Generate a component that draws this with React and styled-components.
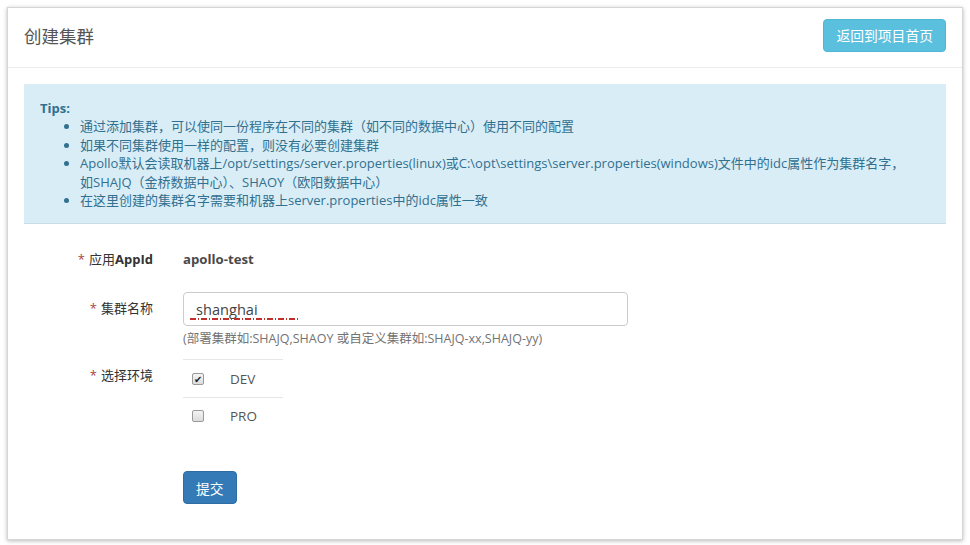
import React from "react";
import styled, { createGlobalStyle } from "styled-components";

const GlobalStyle = createGlobalStyle`
  html, body {
    margin: 0;
    padding: 0;
    background: #fff;
  }
  body {
    font-family: "Open Sans", "Noto Sans CJK SC", sans-serif;
    font-size: 14px;
    color: #333;
  }
`;

// --- Panel ---
const Page = styled.div`
  padding: 7px;
  width: 970px;
  height: 545px;
  box-sizing: border-box;
`;

const Panel = styled.div`
  height: 533px;
  box-sizing: border-box;
  border: 1px solid #d6d6d6;
  box-shadow: 0 1px 4px rgba(0, 0, 0, 0.28);
  background: #fff;
`;

const PanelHeader = styled.div`
  display: flex;
  align-items: center;
  justify-content: space-between;
  height: 60px;
  box-sizing: border-box;
  padding: 0 16px 5px 16px;
  border-bottom: 1px solid #ececec;
`;

const Title = styled.h1`
  margin: 0;
  font-size: 17.5px;
  font-weight: 400;
  color: #555;
`;

const Button = styled.button`
  font-family: inherit;
  font-size: 13.8px;
  color: #fff;
  border: 1px solid ${(p) => p.$border};
  background: ${(p) => p.$bg};
  border-radius: 4px;
  height: 33px;
  padding: 0 ${(p) => p.$pad || 12}px;
  cursor: pointer;
`;

const Body = styled.div`
  padding: 16px 16px 0 16px;
`;

// --- Tips ---
const Tips = styled.div`
  background: #d9edf7;
  border-bottom: 1px solid #c9dde8;
  color: #31708f;
  padding: 15px 16px 14px 16px;
  font-size: 13px;
  line-height: 18.4px;
`;

const TipsTitle = styled.div`
  font-weight: 700;
`;

const TipsList = styled.ul`
  margin: 0;
  padding-left: 40px;
  white-space: nowrap;
`;

// --- Form ---
const Form = styled.div`
  display: grid;
  grid-template-columns: 129px 1fr;
  column-gap: 30px;
  margin-top: 18px;
`;

const Label = styled.div`
  text-align: right;
  font-size: 13px;
  color: #333;
  line-height: 18px;
  padding-top: ${(p) => p.$top || 7}px;
`;

const Star = styled.span`
  color: #a94442;
  margin-right: 4px;
`;

const Bold = styled.span`
  font-weight: 700;
`;

const Field = styled.div`
  margin-bottom: ${(p) => p.$mb || 15}px;
`;

const StaticValue = styled.div`
  font-weight: 700;
  font-size: 13.2px;
  color: #4a4a4a;
  line-height: 18px;
  padding: 8px 0;
`;

const InputWrap = styled.div`
  position: relative;
  width: 445px;
`;

const Input = styled.input`
  box-sizing: border-box;
  width: 100%;
  height: 34px;
  padding: 0 12px;
  border: 1px solid #ccc;
  border-radius: 4px;
  font-family: inherit;
  font-size: 14.6px;
  color: #444;
  outline: none;
`;

const SpellMark = styled.span`
  position: absolute;
  left: 7px;
  top: 26px;
  width: 108px;
  height: 2px;
  background: repeating-linear-gradient(
    90deg,
    #c0302b 0 6px,
    transparent 6px 8px,
    #c0302b 8px 9px,
    transparent 9px 11px
  );
`;

const Help = styled.div`
  margin-top: 4px;
  font-size: 12.5px;
  color: #737373;
  line-height: 17px;
`;

const EnvTable = styled.div`
  width: 100px;
  border-top: 1px solid #e6e6e6;
`;

const EnvRow = styled.div`
  display: flex;
  align-items: center;
  height: ${(p) => (p.$first ? 37 : 35)}px;
  padding-left: 9px;
  border-top: ${(p) => (p.$first ? "none" : "1px solid #e6e6e6")};
  font-size: 13.5px;
  color: #555;
`;

const Check = styled.span`
  box-sizing: border-box;
  width: 12px;
  height: 12px;
  border: 1px solid #9a9a9a;
  border-radius: 2px;
  background: linear-gradient(#f4f4f4, #dcdcdc);
  margin-right: 26px;
  display: flex;
  align-items: center;
  justify-content: center;
  font-size: 10px;
  line-height: 1;
  color: #222;
`;

const Actions = styled.div`
  margin-top: 38px;
`;

const envs = [
  { name: "DEV", checked: true },
  { name: "PRO", checked: false },
];

const App = () => {
  return (
    <Page>
      <GlobalStyle />
      <Panel>
        <PanelHeader>
          <Title>创建集群</Title>
          <Button $bg="#5bc0de" $border="#4fb6d6" $pad={12}>返回到项目首页</Button>
        </PanelHeader>
        <Body>
          <Tips>
            <TipsTitle>Tips:</TipsTitle>
            <TipsList>
              <li>通过添加集群，可以使同一份程序在不同的集群（如不同的数据中心）使用不同的配置</li>
              <li>如果不同集群使用一样的配置，则没有必要创建集群</li>
              <li>
                Apollo默认会读取机器上/opt/settings/server.properties(linux)或C:\opt\settings\server.properties(windows)文件中的idc属性作为集群名字，
                <br />
                如SHAJQ（金桥数据中心）、SHAOY（欧阳数据中心）
              </li>
              <li>在这里创建的集群名字需要和机器上server.properties中的idc属性一致</li>
            </TipsList>
          </Tips>

          <Form>
            <Label $top={8}>
              <Star>*</Star>应用<Bold>AppId</Bold>
            </Label>
            <Field $mb={16}>
              <StaticValue>apollo-test</StaticValue>
            </Field>

            <Label>
              <Star>*</Star>集群名称
            </Label>
            <Field $mb={12}>
              <InputWrap>
                <Input defaultValue="shanghai" spellCheck={false} />
                <SpellMark />
              </InputWrap>
              <Help>(部署集群如:SHAJQ,SHAOY 或自定义集群如:SHAJQ-xx,SHAJQ-yy)</Help>
            </Field>

            <Label $top={7}>
              <Star>*</Star>选择环境
            </Label>
            <Field $mb={0}>
              <EnvTable>
                {envs.map((env, i) => (
                  <EnvRow key={env.name} $first={i === 0}>
                    <Check>{env.checked ? "✔" : ""}</Check>
                    {env.name}
                  </EnvRow>
                ))}
              </EnvTable>
              <Actions>
                <Button $bg="#337ab7" $border="#2e6da4" $pad={12}>提交</Button>
              </Actions>
            </Field>
          </Form>
        </Body>
      </Panel>
    </Page>
  );
};

export default App;
